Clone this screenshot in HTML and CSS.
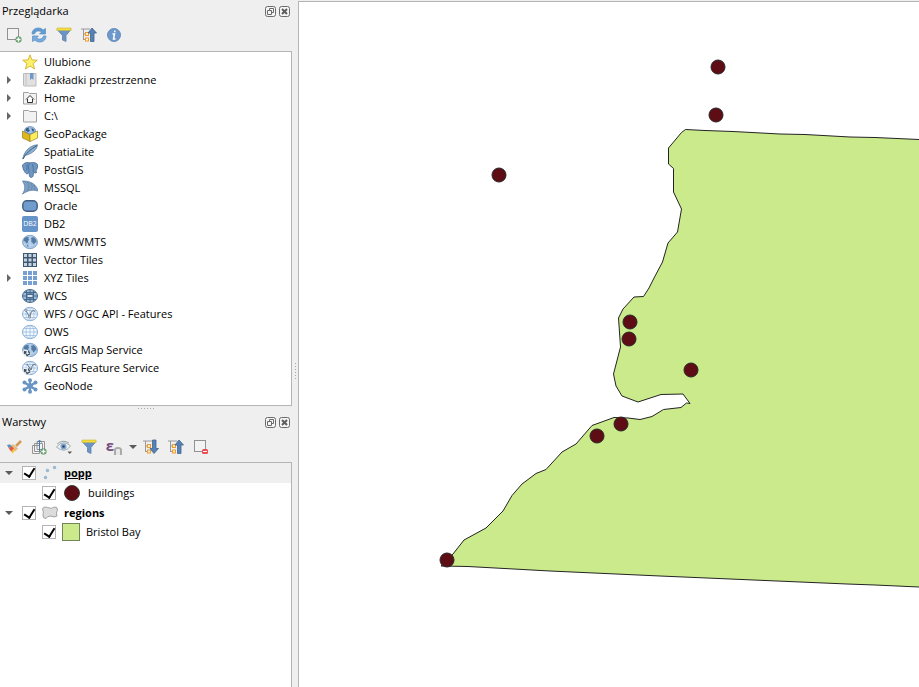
FILE: index.html
```html
<!DOCTYPE html>
<html lang="pl">
<head>
<meta charset="utf-8">
<title>Mapa</title>
<link rel="stylesheet" href="styles.css">
</head>
<body>
<svg class="defs" aria-hidden="true">
  <symbol id="i-float" viewBox="0 0 11 11"><rect x=".5" y=".5" width="10" height="10" rx="2" fill="#f4f4f4" stroke="#6a6a6a"/><path d="M4.500 4V2.500h4v4H7M2.500 4.500h4v4h-4z" fill="none" stroke="#6a6a6a"/></symbol>
  <symbol id="i-close" viewBox="0 0 11 11"><rect x=".5" y=".5" width="10" height="10" rx="2" fill="#f4f4f4" stroke="#6a6a6a"/><path d="M3 3l5 5M8 3L3 8" stroke="#5c5c5c" stroke-width="2"/></symbol>
  <symbol id="i-right" viewBox="0 0 8 8"><path d="M2 0l4 4-4 4z" fill="#666"/></symbol>
  <symbol id="i-down" viewBox="0 0 8 8"><path d="M0 2h8L4 6z" fill="#5a5a5a"/></symbol>
  <symbol id="i-filter" viewBox="0 0 16 16"><path d="M1 2.500h14L10 8.500v6L6.500 13V8.500z" fill="#6b93c4" stroke="#5d82ae" stroke-width=".8"/><path d="M1 1h14v2.500H1z" fill="#f4df3c" stroke="#c4b23c" stroke-width=".6"/></symbol>
  <symbol id="i-tree" viewBox="0 0 16 16"><path d="M0 2h9M2.500 2v11M2.500 7h3M2.500 12.500h3" fill="none" stroke="#999"/><rect x="4.500" y="5.500" width="3" height="3" fill="#fff0c0" stroke="#f39a30"/><rect x="4.500" y="11" width="3" height="3" fill="#fff0c0" stroke="#f39a30"/></symbol>
  <symbol id="i-collapse" viewBox="0 0 16 16"><use href="#i-tree"/><path d="M11 1l4.500 5H13v8.500H9.500V6H7z" fill="#5682b6" stroke="#40658f" stroke-width=".8"/></symbol>
  <symbol id="i-expand" viewBox="0 0 16 16"><use href="#i-tree"/><path d="M11 14.500l4.500-5H13V1H9.500v8.500H7z" fill="#5682b6" stroke="#40658f" stroke-width=".8"/></symbol>
  <symbol id="i-globe" viewBox="0 0 16 16"><ellipse cx="8" cy="8" rx="7.500" ry="6.700" fill="#a9c7e8" stroke="#7397c0" stroke-width=".8"/><path d="M2 4.500L4.500 3l2.500.3-.8 1.500 1.300 1-1.500 1v1.500L4.500 9.500 3 7.300 1.500 7zM9 4l2.500-1L14 5.500 14.500 8l-1.700.7-.8 2.800-1.200-2.500-1.600-1.500L9.500 6zM4.500 10l1.800.8.2 2L5 12.300z" fill="#55799f"/><path d="M2 10q6 3 12 0M8 2v12" fill="none" stroke="#d7e6f6" stroke-width=".5"/></symbol>
  <symbol id="i-wire" viewBox="0 0 16 16"><ellipse cx="8" cy="8" rx="7.500" ry="6.700" fill="#f2f8ff" stroke="#79a1d0" stroke-width=".9"/><path d="M.5 8h15M2 4.500h12M2 11.500h12M8 1.500v13" stroke="#9dbce0" stroke-width=".8" fill="none"/><ellipse cx="8" cy="8" rx="4" ry="6.500" fill="none" stroke="#9dbce0" stroke-width=".8"/></symbol>
  <symbol id="i-arc" viewBox="0 0 16 16"><path d="M.5 9.500L3 7.500l3 .5 2.500 2.500-1 4H3.500l-2-1.500z" fill="#e3ebf2"/><path d="M2 9.500l2 .5-1 1.500L2 10.500M4.500 14l2-1.500L8 12M6.500 8.500l.5 2 1 .5M4 12.500l1-.5" fill="none" stroke="#33414e" stroke-width="1.200"/></symbol>
</svg>
<div class="app">
  <div class="sidebar">
    <section class="panel browser">
      <header class="title"><h2>Przeglądarka</h2>
        <button aria-label="Odepnij"><svg class="s11"><use href="#i-float"/></svg></button>
        <button aria-label="Zamknij"><svg class="s11"><use href="#i-close"/></svg></button>
      </header>
      <div class="toolbar">
        <button aria-label="Dodaj warstwy"><svg viewBox="0 0 16 16"><rect x="1.500" y="1.500" width="11" height="11" fill="#f3f3f3" stroke="#929292"/><rect x="10" y="10" width="5" height="5" rx="1.500" fill="#8fbf98" stroke="#549361"/><path d="M12.500 10.500v4M10.500 12.500h4" stroke="#fff"/></svg></button>
        <button aria-label="Odśwież"><svg viewBox="0 0 16 16"><path d="M1 7c0-4 3-6 6.500-6 2 0 3.500.8 4.500 2l2.500-1.500V7H8.500l2-2C7.500 3 4.500 4 3.500 7z" fill="#639bd0" stroke="#5a8fc5" stroke-width=".7"/><path d="M15 9c0 4-3 6-6.500 6-2 0-3.500-.8-4.500-2l-2.500 1.500V9h6l-2 2c3 2 6 1 7-2z" fill="#78aadc" stroke="#5a8fc5" stroke-width=".7"/></svg></button>
        <button aria-label="Filtruj"><svg><use href="#i-filter"/></svg></button>
        <button aria-label="Zwiń wszystko"><svg><use href="#i-collapse"/></svg></button>
        <button aria-label="Informacje"><svg viewBox="0 0 16 16"><circle cx="8" cy="8" r="6.500" fill="#6d98cc" stroke="#5680b2" stroke-width=".8"/><path d="M8.800 3.500v1.800M6.500 7h2l-1 5h2" fill="none" stroke="#fff" stroke-width="1.500"/></svg></button>
      </div>
      <ul class="tree">
        <li><svg viewBox="0 0 16 16"><path d="M8 .8l1.900 5.100 5.400.3-4.200 3.400 1.500 5.400L8 12 3.400 15l1.500-5.400L.7 6.200l5.400-.3z" fill="#fdf06a" stroke="#d0b232" stroke-width=".9"/></svg>Ulubione</li>
        <li><button aria-label="Rozwiń"><svg><use href="#i-right"/></svg></button><svg viewBox="0 0 16 16"><path d="M1.500 1.500h12.500v12.500h-11.500q-1 0-1-1z" fill="#e1e1e1" stroke="#bbb"/><path d="M4 1.500v12" stroke="#c4c4c4"/><path d="M8 1h3.500v7L9.800 6.500 8 8z" fill="#6d98c7"/></svg>Zakładki przestrzenne</li>
        <li><button aria-label="Rozwiń"><svg><use href="#i-right"/></svg></button><svg viewBox="0 0 16 16"><path d="M1.500 2.500h5l1 1h7v10.500h-13z" fill="#f2f2f2" stroke="#a0a0a0"/><path d="M4 9.500L8 5.500l4 4M5.500 9v3.500h5V9" fill="#fff" stroke="#333"/></svg>Home</li>
        <li><button aria-label="Rozwiń"><svg><use href="#i-right"/></svg></button><svg viewBox="0 0 16 16"><path d="M1.500 2.500h5l1 1h7v10.500h-13z" fill="#f2f2f2" stroke="#a0a0a0"/></svg>C:\</li>
        <li><svg viewBox="0 0 16 16"><path d="M.5 5L8 8.500v7L.5 12z" fill="#dfb71d" stroke="#9c8228" stroke-width=".7"/><path d="M15.500 5L8 8.500v7l7.500-3.500z" fill="#fff05a" stroke="#9c8228" stroke-width=".7"/><path d="M2.500 5.500C2 -1 14 -1 13.500 5.500L8 8.300z" fill="#9cc0e6" stroke="#55799f" stroke-width=".7"/><path d="M4 2.500l3-1-.5 2L8 4.500 6 6 3.500 4.500zM9.500 2l2.500 1.500L11.500 6 10 4.500z" fill="#34587c"/></svg>GeoPackage</li>
        <li><svg viewBox="0 0 16 16"><path d="M.8 15C2 8 7 1.500 15.500.8c-.5 4-4 8.500-12 10.500z" fill="#8bb0d6" stroke="#55789b" stroke-width=".8"/><path d="M.8 15C4 9 9 5 15 1.500" fill="none" stroke="#435f7b"/></svg>SpatiaLite</li>
        <li><svg viewBox="0 0 16 16"><path d="M3 1c2-1 4-.5 5 0 3-1 7-.5 7.500 2 .5 3-1 5-2 6.500l1.500.5-1.500 1-2-.5-.5 4-2 1-1.500-1-.5-4-2 1.500C2.500 11 .5 6 .5 3z" fill="#6f98c5" stroke="#4e7097" stroke-width=".9"/><path d="M5 2v5l-1 2M8 1c-2 2-2 4-1 7v2M10.500 2c.5 3 1.500 4 .5 8" fill="none" stroke="#4e7097" stroke-width=".9"/></svg>PostGIS</li>
        <li><svg viewBox="0 0 16 16"><path d="M.5 1C7 1 13 3 15.500 9v2C10 9 5 11 .5 14 4 9 3 5 .5 1z" fill="#7c9fc5" stroke="#5d7fa3" stroke-width=".8"/><path d="M5 1.500c3 4 2 7 0 10M9 3c2 3 1 5 0 7M12 5c1 2 1 3 .5 5" fill="none" stroke="#5d7fa3" stroke-width=".8"/></svg>MSSQL</li>
        <li><svg viewBox="0 0 16 16"><rect x=".8" y="2.800" width="14.400" height="10.400" rx="4" fill="#6f9bcd" stroke="#435f80" stroke-width="1.400"/></svg>Oracle</li>
        <li><svg viewBox="0 0 16 16"><rect width="16" height="16" rx="2" fill="#6693c8"/><text x="8" y="10" class="db2">DB2</text></svg>DB2</li>
        <li><svg><use href="#i-globe"/></svg>WMS/WMTS</li>
        <li><svg viewBox="0 0 16 16"><path d="M1 1h14v14H1z" fill="#41586f"/><path d="M2 2h3v3H2zM6.500 2h3v3h-3zM11 2h3v3h-3zM2 6.500h3v3H2zM6.500 6.500h3v3h-3zM11 6.500h3v3h-3zM2 11h3v3H2zM6.500 11h3v3h-3zM11 11h3v3h-3z" fill="#c5d5e6"/></svg>Vector Tiles</li>
        <li><button aria-label="Rozwiń"><svg><use href="#i-right"/></svg></button><svg viewBox="0 0 16 16"><path d="M1 1h4v4H1zM6 1h4v4H6zM11 1h4v4h-4zM1 6h4v4H1zM6 6h4v4H6zM11 6h4v4h-4zM1 11h4v4H1zM6 11h4v4H6zM11 11h4v4h-4z" fill="#76a0d1"/></svg>XYZ Tiles</li>
        <li><svg viewBox="0 0 16 16"><ellipse cx="8" cy="8" rx="7.500" ry="6.500" fill="#9dbddd" stroke="#48688b"/><path d="M2 4.500h12M1 8h14M2 11.500h12M4.500 3v10M11.500 3v10M8 2v12" stroke="#48688b"/><path d="M5 5.500h6v5H5z" fill="#48688b"/><path d="M5.500 7h5v2h-5z" fill="#d8e7f7"/></svg>WCS</li>
        <li><svg viewBox="0 0 16 16"><use href="#i-wire"/><path d="M4 4.500L7.500 11 9.500 5.500q2.500-2 4 .5" fill="none" stroke="#566676" stroke-width=".9"/><g fill="#fff" stroke="#566676" stroke-width=".7"><circle cx="4" cy="4.500" r="1"/><circle cx="7.500" cy="11" r="1"/></g></svg>WFS / OGC API - Features</li>
        <li><svg><use href="#i-wire"/></svg>OWS</li>
        <li><svg viewBox="0 0 16 16"><use href="#i-globe"/><use href="#i-arc"/></svg>ArcGIS Map Service</li>
        <li><svg viewBox="0 0 16 16"><use href="#i-wire"/><path d="M5 4l4 6 1.500-5q2-1.500 3.500.5" fill="none" stroke="#566676" stroke-width=".9"/><use href="#i-arc"/></svg>ArcGIS Feature Service</li>
        <li><svg viewBox="0 0 16 16"><path d="M8 2v12M2.500 4.500l11 7M13.500 4.500l-11 7" stroke="#6795c4" stroke-width="2.200"/><g fill="#6795c4"><circle cx="8" cy="8" r="2.700"/><circle cx="8" cy="2.200" r="2"/><circle cx="8" cy="13.800" r="2"/><circle cx="2.500" cy="4.500" r="2"/><circle cx="13.500" cy="11.500" r="2"/><circle cx="13.500" cy="4.500" r="2"/><circle cx="2.500" cy="11.500" r="2"/></g></svg>GeoNode</li>
      </ul>
    </section>
    <div class="hsplit"></div>
    <section class="panel layers">
      <header class="title"><h2>Warstwy</h2>
        <button aria-label="Odepnij"><svg class="s11"><use href="#i-float"/></svg></button>
        <button aria-label="Zamknij"><svg class="s11"><use href="#i-close"/></svg></button>
      </header>
      <div class="toolbar">
        <button aria-label="Styl"><svg viewBox="0 0 16 16"><path d="M15 2l-5 5" stroke="#d29a55" stroke-width="2.500"/><path d="M7 5l5 4.500-3 3L4 7z" fill="#dfbd84"/><path d="M1 6l3-.5L9.500 11l-3 3.500z" fill="#f3c544"/><path d="M1 6l3-.5 2 2L2.700 9z" fill="#5c8fcb"/><path d="M2.700 9L6 7.500l2 2-3 3z" fill="#e6574a"/></svg></button>
        <button aria-label="Dodaj grupę"><svg viewBox="0 0 16 16"><path d="M1.500 6.500h7v8h-7zM3.500 4.500h8v8h-8zM6 2.500h7.500v8H6z" fill="#f3f3f3" stroke="#8a8a8a" stroke-width=".9"/><path d="M8.500 12V2M6.500 3.500l2-2.500 2 2.500" fill="none" stroke="#4779ab"/><rect x="10" y="10" width="5" height="5" rx="1.500" fill="#8fbf98" stroke="#549361"/><path d="M12.500 10.500v4M10.500 12.500h4" stroke="#fff"/></svg></button>
        <button aria-label="Widoczność"><svg viewBox="0 0 16 16"><path d="M.5 8q7-8 14-1-6 8-14 1z" fill="#f2f2f2" stroke="#9aa4ac" stroke-width=".9"/><circle cx="7.500" cy="7.500" r="3" fill="#7ba5d3"/><circle cx="7.500" cy="7.500" r="1.300" fill="#34495e"/><path d="M1 5q6-5 12-1" fill="none" stroke="#9aa4ac"/><path d="M11.500 12.500h4.500L13.800 15z" fill="#555"/></svg></button>
        <button aria-label="Filtruj warstwy"><svg><use href="#i-filter"/></svg></button>
        <button aria-label="Filtr wyrażeniem"><span class="eps">ε</span><svg class="magnet" viewBox="0 0 8 8"><path d="M1 8V3Q1 1 4 1t3 2v5" fill="none" stroke="#aaa" stroke-width="2"/><path d="M3 3.500V8M5 3.500V8" stroke="#ddd"/></svg></button>
        <button class="drop" aria-label="Opcje filtra"><svg><use href="#i-down"/></svg></button>
        <button aria-label="Rozwiń wszystko"><svg><use href="#i-expand"/></svg></button>
        <button aria-label="Zwiń wszystkie warstwy"><svg><use href="#i-collapse"/></svg></button>
        <button aria-label="Usuń warstwę"><svg viewBox="0 0 16 16"><rect x="1.500" y="1.500" width="11" height="11" fill="#f3f3f3" stroke="#929292"/><rect x="9" y="10" width="6" height="5" rx="1.500" fill="#ed4b50"/><path d="M10 12.500h4" stroke="#fff"/></svg></button>
      </div>
      <ul class="layer-tree">
        <li class="group active"><button aria-label="Zwiń"><svg><use href="#i-down"/></svg></button><label><input type="checkbox" checked><svg viewBox="0 0 16 16"><g fill="#a5c8e0" stroke="#6b98ba" stroke-width=".7"><circle cx="3.500" cy="12.500" r="1.200"/><circle cx="5.500" cy="5.500" r="1.200"/><circle cx="12.500" cy="2.500" r="1.200"/></g></svg><span>popp</span></label></li>
        <li class="child"><label><input type="checkbox" checked><svg class="dot" viewBox="0 0 16 16"><circle cx="8" cy="8" r="7.500" fill="#5f0d15" stroke="#383838"/></svg><span>buildings</span></label></li>
        <li class="group"><button aria-label="Zwiń"><svg><use href="#i-down"/></svg></button><label><input type="checkbox" checked><svg viewBox="0 0 16 16"><path d="M.5 4q1-3 5-1.500 4 2 7-.5 3-.5 3 3-2 3-.5 6-3 2-6 0-4 0-5 2.500Q.5 13.500 1 10q1-3-.5-6z" fill="#dcdcdc" stroke="#999" stroke-width=".9"/></svg><span>regions</span></label></li>
        <li class="child last"><label><input type="checkbox" checked><i class="fill"></i><span>Bristol Bay</span></label></li>
      </ul>
    </section>
  </div>
  <div class="vsplit"></div>
  <main class="map">
    <svg viewBox="299 2 620 685" preserveAspectRatio="xMinYMin slice" role="img" aria-label="Mapa: Bristol Bay">
      <path class="region" d="M930 140L919 139.500 875 137.500 850 137 805 134.500 780 134 733 131.500 705 130.500 685.500 129.500 681.500 132.500 668.500 148 668.500 164 673.500 168.500 673.500 192 681.500 209 677.500 232 668 243 662.500 262 653.500 279 649 288 643.500 296.500 634 297 623 309 618.500 318 620.500 347 613.500 374 616 386 622 396 638 402 661 394.500 683 394 690 403.500 686.500 403 681 407.500 663.500 409.500 652 416.500 640 419.500 628 418 614 417.500 592 425.500 576 444 562 452 546 469.500 536 473.500 522 484 512 495.500 503 511 486 528 464 540 453 554 441 566 468 566.500 550 571 660 576 847 584 875 585 919 587 930 587.500z"/>
      <g class="points"><circle cx="718" cy="67" r="7"/><circle cx="716" cy="115" r="7"/><circle cx="499" cy="175" r="7"/><circle cx="630" cy="322" r="7"/><circle cx="629" cy="339" r="7"/><circle cx="691" cy="370" r="7"/><circle cx="621" cy="424" r="7"/><circle cx="597" cy="436" r="7"/><circle cx="447" cy="560" r="7"/></g>
    </svg>
  </main>
</div>
</body>
</html>
```
FILE: styles.css
```css
* { box-sizing: border-box; }
body { margin: 0; background: #efefef; color: #000; font: 11px/18px "Open Sans", "Noto Sans", sans-serif; }
.defs { position: absolute; width: 0; height: 0; }
.app { display: flex; height: 100vh; overflow: hidden; }
.sidebar { flex: 0 0 292px; display: flex; flex-direction: column; min-width: 0; }
.panel { display: flex; flex-direction: column; min-height: 0; }
.layers { flex: 1; }
svg { display: block; width: 16px; height: 16px; flex: none; }
button { border: 0; padding: 0; background: none; display: flex; align-items: center; justify-content: center; }
h2 { margin: 0; flex: 1; font-size: 11px; font-weight: 400; }
.title { display: flex; align-items: center; gap: 3px; height: 22px; padding: 0 2px; }
.layers .title { height: 18px; }
.s11 { width: 11px; height: 11px; }
.toolbar { display: flex; align-items: center; gap: 1px; height: 29px; padding: 0 2px 3px; }
.layers .toolbar { height: 31px; padding-bottom: 0; }
.toolbar button { width: 24px; height: 24px; }
.toolbar .drop { width: 12px; margin-right: -1px; }
.drop svg, li button svg, .toolbar .magnet { width: 8px; height: 8px; }
.magnet { align-self: flex-end; margin-bottom: 4px; }
.eps { font: bold 15px/20px "Open Sans", sans-serif; color: #754b7d; align-self: flex-start; }
ul { list-style: none; margin: 0; padding: 1px 0; background: #fff; border: solid #b4b4b4; border-width: 1px 1px 1px 0; }
.tree { padding-bottom: 10px; }
li { display: flex; align-items: center; }
li button { width: 18px; height: 16px; }
.tree li { height: 18px; gap: 6px; padding-left: 22px; }
.tree li button { margin: 0 -2px 0 -22px; }
.db2 { font: 7px "Open Sans", sans-serif; fill: #fff; text-anchor: middle; }
.hsplit { height: 7px; display: flex; justify-content: center; padding-top: 2px; }
.hsplit::before { content: ""; width: 17px; height: 1px; background: repeating-linear-gradient(90deg, #aaa 0 1px, transparent 1px 3px); }
.vsplit { flex: 0 0 6px; display: flex; align-items: center; justify-content: center; padding-top: 56px; }
.vsplit::before { content: ""; width: 1px; height: 17px; background: repeating-linear-gradient(#aaa 0 1px, transparent 1px 3px); }
.layer-tree { flex: 1; padding: 0; border-bottom: 0; }
.layer-tree li { height: 20px; }
.layer-tree .last { height: 18px; }
.layer-tree .active { background: #efefef; padding-bottom: 1px; }
.layer-tree .active span { text-decoration: underline; }
.layer-tree label { display: flex; align-items: center; }
.group label { gap: 6px; padding-left: 4px; font-weight: 700; }
.child label { gap: 6px; padding-left: 42px; }
.child .dot + span { padding-left: 2px; }
.child .dot { margin-left: 2px; }
input { appearance: none; margin: 0; width: 14px; height: 14px; border: 1px solid #b4b4b4; background: #fff; display: grid; place-items: center; }
input:checked::before { content: ""; width: 5px; height: 9px; margin-top: -2px; border: solid #000; border-width: 0 2px 2px 0; transform: rotate(32deg); }
.fill { width: 18px; height: 18px; background: #cbea8b; border: 1px solid #74835a; }
.map { flex: 1; min-width: 0; margin-top: 1px; background: #fff; border: solid #b4b4b4; border-width: 1px 0 0 1px; }
.map svg { width: 100%; height: 100%; }
.region { fill: #cbea8b; stroke: #232323; stroke-width: 1; }
.points { fill: #5f0d15; stroke: #262626; }
```
